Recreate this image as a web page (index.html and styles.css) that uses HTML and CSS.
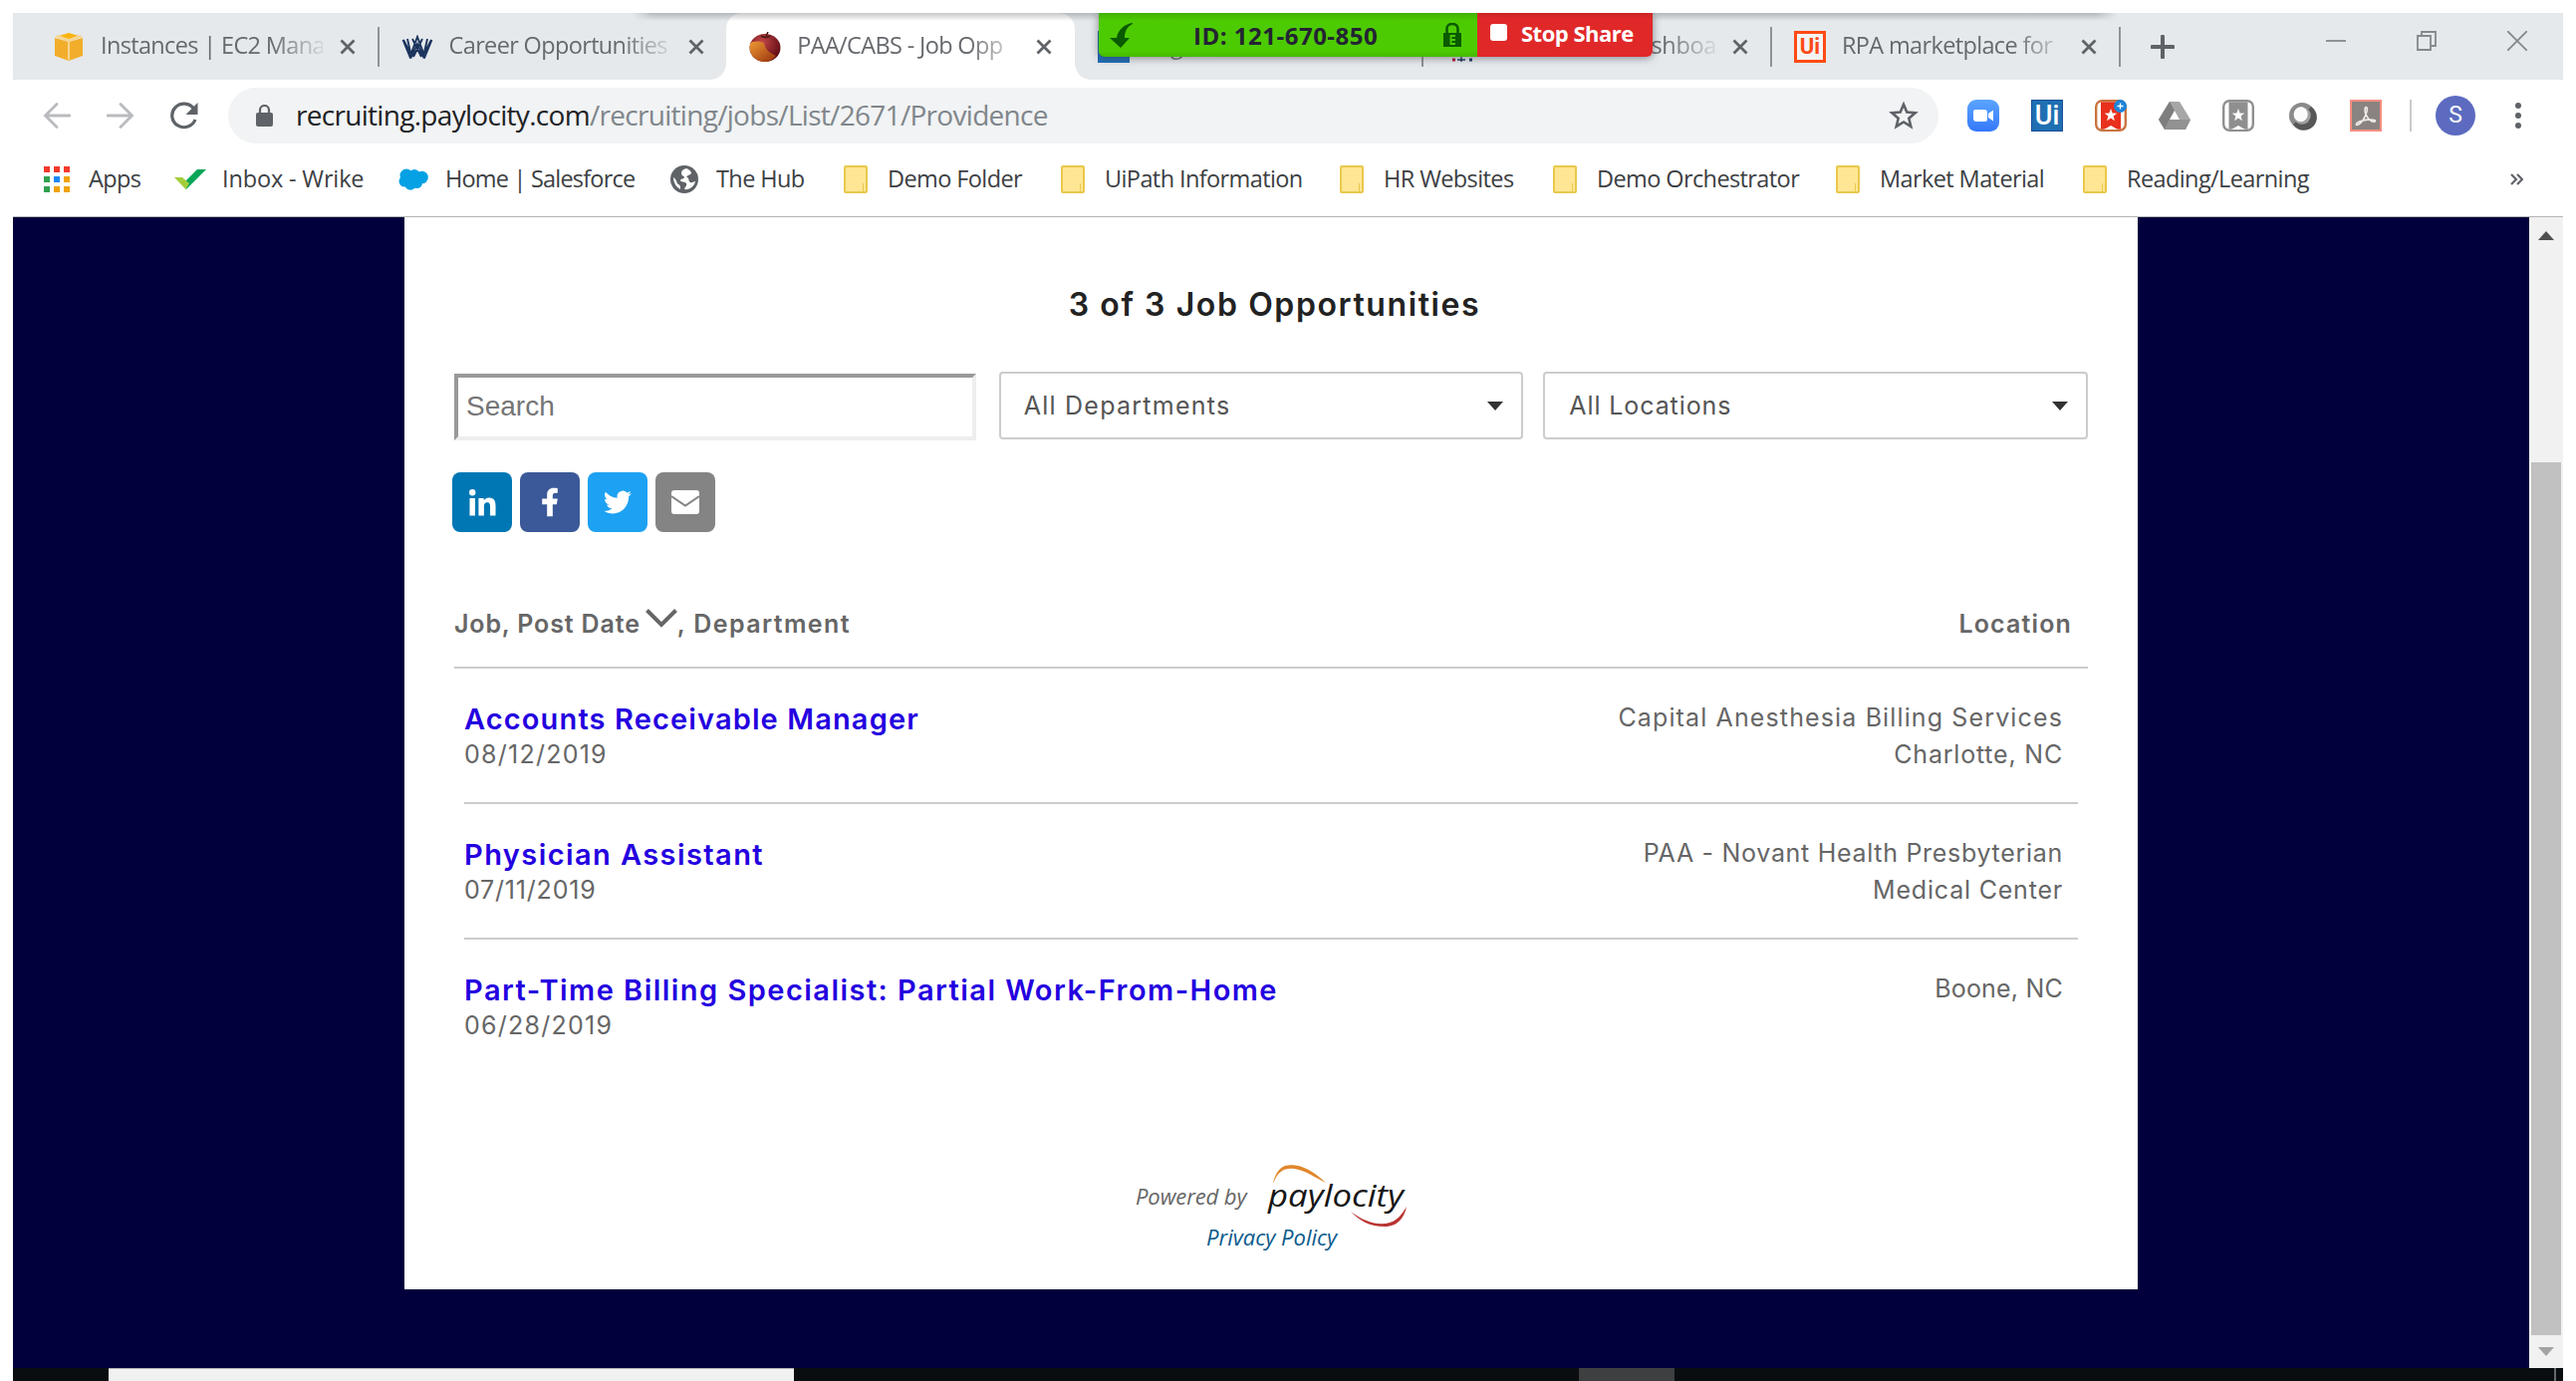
FILE: index.html
```
<!DOCTYPE html>
<html lang="en">
<head>
<meta charset="utf-8">
<title>PAA/CABS - Job Opportunities</title>
<link rel="stylesheet" href="styles.css">
</head>
<body>
<div class="screen">
  <header class="tabs">
    <div class="tab">
      <span class="fav"><svg width="30" height="30" viewBox="0 0 30 30"><path d="M1 6v18l14 5 14-5V6L15 10z" fill="#f2ae2b"/><path d="M15 1l10 3-10 4L5 4z" fill="#fbb40e"/><path d="M1 5l13 5v18h2V10l13-5-3-2-11 4L4 3z" fill="#f6d592"/></svg></span>
      <span class="title">Instances | EC2 Mana</span>
      <svg class="x" viewBox="0 0 16 16"><path d="M1.5 1.5l13 13m0-13l-13 13"/></svg>
    </div>
    <div class="tab sep-l">
      <span class="fav"><svg width="32" height="24" viewBox="0 0 32 24"><g fill="none" stroke="#1c355e" stroke-width="1.9"><path d="M1.500 5l7 17L16 2l7.500 20 7-17M6 4l4 18 6-13 6 13 4-18M11 4l9 18M21 4l-9 18M2 5l9 17M30 5L21 22"/></g></svg></span>
      <span class="title">Career Opportunities</span>
      <svg class="x" viewBox="0 0 16 16"><path d="M1.5 1.5l13 13m0-13l-13 13"/></svg>
    </div>
    <div class="tab active">
      <span class="fav"><svg width="32" height="30" viewBox="0 0 32 30"><defs><radialGradient id="ap" cx=".4" cy=".3" r=".7"><stop offset="0" stop-color="#c4464a"/><stop offset="1" stop-color="#5c0a10"/></radialGradient><linearGradient id="ora" x2="1" y2="1"><stop offset="0" stop-color="#ef9a35"/><stop offset="1" stop-color="#96300c"/></linearGradient></defs><ellipse cx="16" cy="16" rx="15.5" ry="14" fill="url(#ap)"/><path d="M1 12c2-3 9-3 14-1 1 6 5 10 12 13-3 4-7 6-11 6C6 30-1 22 1 12z" fill="url(#ora)"/><path d="M12 4c3 2 6 2 9 0M17 4l2-4" stroke="#4a1810" stroke-width="1.6" fill="none"/></svg></span>
      <span class="title">PAA/CABS - Job Opp</span>
      <svg class="x" viewBox="0 0 16 16"><path d="M1.5 1.5l13 13m0-13l-13 13"/></svg>
    </div>
    <div class="tab">
      <span class="fav"><svg width="32" height="32"><rect width="32" height="32" fill="#1e6db8"/></svg></span>
      <span class="title">Login</span>
    </div>
    <div class="tab sep-l">
      <span class="fav"><svg width="24" height="30" viewBox="0 0 24 30"><path d="M3 28h3" stroke="#b5123e" stroke-width="3"/><path d="M20 28h3" stroke="#1c355e" stroke-width="3"/><path d="M12 24v7M8 28h8" stroke="#1c355e" stroke-width="1.400"/></svg></span>
      <span class="title dash">shboa</span>
      <svg class="x" viewBox="0 0 16 16"><path d="M1.5 1.5l13 13m0-13l-13 13"/></svg>
    </div>
    <div class="tab sep-l">
      <span class="fav ui-o">Ui</span>
      <span class="title">RPA marketplace for</span>
      <svg class="x" viewBox="0 0 16 16"><path d="M1.5 1.5l13 13m0-13l-13 13"/></svg>
    </div>
    <div class="newtab"><svg width="24" height="24" viewBox="0 0 24 24"><path d="M12 1.5v21M1.5 12h21" stroke="#5f6368" stroke-width="4" stroke-linecap="round"/></svg></div>
    <div class="winbtns">
      <svg width="20" height="20" viewBox="0 0 20 20"><path d="M0 10h20"/></svg>
      <svg width="20" height="20" viewBox="0 0 20 20"><path d="M1 5h13v14H1zM5 5V1h14v14h-5"/></svg>
      <svg width="20" height="20" viewBox="0 0 20 20"><path d="M0 0l20 20M20 0L0 20"/></svg>
    </div>
  </header>

  <div class="toolbar">
    <svg class="nav" viewBox="0 0 28 28"><path d="M27 14H3M14 2.500L2.500 14 14 25.500" stroke="#b9bbbe" stroke-width="2.800" fill="none" stroke-linecap="round"/></svg>
    <svg class="nav" viewBox="0 0 28 28"><path d="M1 14h24M14 2.500L25.500 14 14 25.500" stroke="#b9bbbe" stroke-width="2.800" fill="none" stroke-linecap="round"/></svg>
    <svg class="nav" viewBox="0 0 28 28"><path d="M23.500 7A12 11.800 0 1 0 25 18" stroke="#5f6368" stroke-width="3.200" fill="none"/><path d="M27.500 1v12h-12z" fill="#5f6368"/></svg>
    <div class="omnibox">
      <svg width="17" height="22" viewBox="0 0 17 22"><rect y="8" width="17" height="14" rx="2" fill="#5f6368"/><path d="M4 9V5.500a4.500 4.500 0 0 1 9 0V9" fill="none" stroke="#5f6368" stroke-width="2.200"/></svg>
      <span class="url">recruiting.paylocity.com<i>/recruiting/jobs/List/2671/Providence</i></span>
      <svg class="star" width="30" height="30" viewBox="0 0 30 30"><path d="M15 3.800l3.300 7.700 8.400.7-6.400 5.500 2 8.200-7.300-4.400-7.300 4.400 2-8.200-6.400-5.500 8.400-.7z" fill="none" stroke="#5f6368" stroke-width="2.600"/></svg>
    </div>
    <div class="exts">
      <svg viewBox="0 0 32 32"><defs><linearGradient id="zm" x2="0" y2="1"><stop offset="0" stop-color="#5aa5ff"/><stop offset="1" stop-color="#3678fb"/></linearGradient></defs><rect width="32" height="32" rx="9" fill="url(#zm)"/><path d="M6 12q0-2 2-2h9q3 0 3 3v7q0 2-2 2H9q-3 0-3-3zM21 14l5-3.500v11L21 18z" fill="#fff"/></svg>
      <span class="ui-b">Ui</span>
      <svg viewBox="0 0 32 32"><rect x="1.200" y="1.200" width="29.600" height="29.600" rx="6" fill="#fff" stroke="#c9743f" stroke-width="2.400"/><path d="M6 2.400h20v27.200H6z" fill="#e8301c"/><path d="M9 30l7-4 7 4z" fill="#fff"/><path d="M16 9l1.600 4.600 4.700.1-3.700 2.900 1.300 4.700-3.900-2.700-3.900 2.700 1.300-4.700-3.700-2.900 4.700-.1z" fill="#fff"/><circle cx="25.500" cy="6.500" r="6.500" fill="#1d84d8"/><path d="M25.500 3.500v6M22.500 6.500h6" stroke="#fff" stroke-width="1.300"/></svg>
      <svg viewBox="0 0 32 32"><path d="M11 2h10l11 18-5 10H6L0 20z" fill="#a6a6a6"/><path d="M11 2l5 9L6 30 0 20z" fill="#7e7e7e"/><path d="M11 20h21l-5 10H6z" fill="#929292"/><path d="M16 11l5 9H11z" fill="#fff"/></svg>
      <svg viewBox="0 0 32 32"><rect x="1.200" y="1.200" width="29.600" height="29.600" rx="6" fill="#fff" stroke="#8f8f8f" stroke-width="2.400"/><path d="M6.500 2.400h19v27.200h-19z" fill="#8f8f8f"/><path d="M9 30l7-4 7 4z" fill="#fff"/><path d="M16 9l1.600 4.600 4.700.1-3.700 2.900 1.300 4.700-3.900-2.700-3.900 2.700 1.300-4.700-3.700-2.900 4.700-.1z" fill="#fff"/></svg>
      <svg viewBox="0 0 32 32"><circle cx="16" cy="17.500" r="13.500" fill="#f0f0f0"/><circle cx="16" cy="16" r="13" fill="#8a8a8a"/><path d="M25 7A13 13 0 1 1 7 25l3-3A9 9 0 0 0 22 10z" fill="#575757"/><circle cx="16" cy="16" r="8.700" fill="#a0a0a0"/><ellipse cx="14.700" cy="14.700" rx="7" ry="7.500" fill="#fafafa"/></svg>
      <svg viewBox="0 0 32 32"><rect x="1" y="1" width="30" height="30" fill="#8b8381" stroke="#f58e80" stroke-width="2"/><path d="M15.500 8c1.500-1.500 2.500 1 1.500 4-1.500 5-5 11-8.500 13-3 1.500-3-1.500 1-3 5-2 12-2.500 15-1.500 2.500 1 0 2.500-3 1-4-2-7.500-9-6-13.500z" fill="none" stroke="#f0eceb" stroke-width="1.600"/></svg>
    </div>
    <span class="vline"></span>
    <span class="avatar">S</span>
    <svg class="dots" width="6" height="28" viewBox="0 0 6 28"><g fill="#5f6368"><circle cx="3" cy="4" r="3"/><circle cx="3" cy="14" r="3"/><circle cx="3" cy="24" r="3"/></g></svg>
  </div>

  <nav class="bookmarks">
    <a class="b-apps"><svg width="26" height="26" viewBox="0 0 26 26"><path d="M0 0h6v6H0zM10 0h6v6h-6zM20 0h6v6h-6z" fill="#f5382c"/><path d="M0 10h6v6H0zM0 20h6v6H0z" fill="#30a04f"/><path d="M10 10h6v6h-6z" fill="#1d88f5"/><path d="M20 10h6v6h-6zM10 20h6v6h-6zM20 20h6v6h-6z" fill="#f0a206"/></svg><span>Apps</span></a>
    <a class="b-wrike"><svg width="32" height="20" viewBox="0 0 32 20"><path d="M23 0h9L12 20 8 15z" fill="#0aa658"/><path d="M0 8h8l7 6-3.500 6z" fill="#a3ce3a"/></svg><span>Inbox - Wrike</span></a>
    <a class="b-sf"><svg width="30" height="22" viewBox="0 0 30 22"><g fill="#05a1e4"><circle cx="8" cy="7" r="6.500"/><circle cx="16" cy="6.500" r="5.500"/><circle cx="23.500" cy="9" r="6.300"/><circle cx="6" cy="13" r="5.500"/><circle cx="12" cy="16" r="5.800"/><circle cx="18.500" cy="14.500" r="5.500"/></g></svg><span>Home | Salesforce</span></a>
    <a class="b-hub"><svg width="28" height="28" viewBox="0 0 28 28"><circle cx="14" cy="14" r="14" fill="#5f6368"/><path d="M16 3c-3 1-5 2-5 5s3 2 3 4-4 1-4 3 5 1 6 3-1 3-2 6c5 1 10-3 11-8-2 0-3 2-5 1s-1-4-3-5 1-2 3-3 1-4-4-6z" fill="#fff"/><path d="M3 12c0 5 3 10 7 12 0-3 0-4-2-5s-1-4-5-7z" fill="#fff"/></svg><span>The Hub</span></a>
    <a class="b-demo"><b></b><span>Demo Folder</span></a>
    <a class="b-uip"><b></b><span>UiPath Information</span></a>
    <a class="b-hr"><b></b><span>HR Websites</span></a>
    <a class="b-orch"><b></b><span>Demo Orchestrator</span></a>
    <a class="b-mkt"><b></b><span>Market Material</span></a>
    <a class="b-read"><b></b><span>Reading/Learning</span></a>
    <svg class="more" width="13" height="12" viewBox="0 0 13 12"><path d="M1 1l5 5-5 5M7 1l5 5-5 5" fill="none" stroke="#5f6368" stroke-width="2.200"/></svg>
  </nav>

  <div class="viewport">
    <div class="page">
      <main class="card">
        <h1>3 of 3 Job Opportunities</h1>
        <div class="filters">
          <div class="search">Search</div>
          <div class="select dep"><span>All Departments</span><i></i></div>
          <div class="select loc"><span>All Locations</span><i></i></div>
        </div>
        <div class="share">
          <span class="li"><svg viewBox="0 0 24 24" width="37" height="37"><path fill="#fff" d="M20.447 20.452h-3.554v-5.569c0-1.328-.027-3.037-1.852-3.037-1.853 0-2.136 1.445-2.136 2.939v5.667H9.351V9h3.414v1.561h.046c.477-.9 1.637-1.850 3.370-1.850 3.601 0 4.267 2.370 4.267 5.455v6.286zM5.337 7.433a2.062 2.062 0 01-2.063-2.065 2.064 2.064 0 112.063 2.065zm1.782 13.019H3.555V9h3.564v11.452z"/></svg></span>
          <span class="fb"><svg viewBox="0 0 24 24" width="34" height="34"><path fill="#fff" d="M14 13.500h2.800l.7-4H14v-2c0-1.030.4-2 2-2h1.500V2.140c-.326-.043-1.557-.140-2.857-.140C11.928 2 10 3.657 10 6.700v2.800H6.500v4H10V22h4z"/></svg></span>
          <span class="tw"><svg viewBox="0 0 24 24" width="28" height="28"><path fill="#fff" d="M23.953 4.570a10 10 0 01-2.825.775 4.958 4.958 0 002.163-2.723c-.951.555-2.005.959-3.127 1.184a4.920 4.920 0 00-8.384 4.482C7.690 8.095 4.067 6.130 1.640 3.162a4.822 4.822 0 00-.666 2.475c0 1.710.870 3.213 2.188 4.096a4.904 4.904 0 01-2.228-.616v.060a4.923 4.923 0 003.946 4.827 4.996 4.996 0 01-2.212.085 4.936 4.936 0 004.604 3.417 9.867 9.867 0 01-6.102 2.105c-.390 0-.779-.023-1.170-.067a13.995 13.995 0 007.557 2.209c9.053 0 13.998-7.496 13.998-13.985 0-.210 0-.420-.015-.630A9.935 9.935 0 0024 4.590z"/></svg></span>
          <span class="em"><svg viewBox="0 0 28 24" width="28" height="24"><rect width="28" height="24" rx="3" fill="#fff"/><path d="M0 6l14 9.500L28 6" fill="none" stroke="#848484" stroke-width="2"/></svg></span>
        </div>
        <div class="thead">
          <span class="s1">Job, Post Date</span><svg width="32" height="19" viewBox="0 0 32 19"><path d="M1.500 1.500L16 16 30.500 1.500" fill="none" stroke="#666" stroke-width="4"/></svg><span class="s2">, Department</span>
          <span class="s3">Location</span>
        </div>
        <section class="row">
          <div><a class="j1">Accounts Receivable Manager</a><time>08/12/2019</time></div>
          <p><span class="l1">Capital Anesthesia Billing Services</span><br>Charlotte, NC</p>
        </section>
        <section class="row">
          <div><a class="j2">Physician Assistant</a><time class="d2">07/11/2019</time></div>
          <p><span class="l2">PAA - Novant Health Presbyterian</span><br>Medical Center</p>
        </section>
        <section class="row last">
          <div><a class="j3">Part-Time Billing Specialist: Partial Work-From-Home</a><time>06/28/2019</time></div>
          <p><span class="l3">Boone, NC</span></p>
        </section>
        <footer>
          <div class="powered"><span>Powered by</span>
            <svg width="146" height="72" viewBox="0 0 146 72"><text x="3" y="46" textLength="136" lengthAdjust="spacingAndGlyphs" class="logo">paylocity</text><path d="M8 22C12 6 20 3 30 4.500 42 6 52 14 61 22 50 17 40 9 29 8 19 7 13 11 9 21z" fill="#e0862c"/><path d="M86 51c12 9 23 13 35 12 12-2 16-9 21-17-2 10-8 20-22 20-15 0-25-6-34-15z" fill="#b93432"/></svg>
          </div>
          <a class="privacy">Privacy Policy</a>
        </footer>
      </main>
    </div>
    <aside class="scroll">
      <svg width="16" height="9" viewBox="0 0 16 9"><path d="M0 9l8-9 8 9z" fill="#505050"/></svg>
      <span class="thumb"></span>
      <svg width="16" height="9" viewBox="0 0 16 9"><path d="M0 0h16l-8 9z" fill="#a3a3a3"/></svg>
    </aside>
  </div>
  <div class="taskbar"><span class="tb-a"></span><span class="tb-b"></span><span class="tb-c"></span></div>

  <div class="topshade"></div>
  <div class="sharebar">
    <div class="green">
      <svg width="24" height="25" viewBox="0 0 24 25"><path d="M23 0C15 1 8 7 7 15H0l11 10 9-10h-5C15 9 17 4 23 1z" fill="#0a5a00"/></svg>
      <span class="id">ID: 121-670-850</span>
      <svg width="18" height="24" viewBox="0 0 18 24"><rect y="10" width="18" height="14" fill="#0a5a00"/><path d="M3.500 11V5.500a5.500 4.500 0 0 1 11 0V11" fill="none" stroke="#0a5a00" stroke-width="2.600"/><path d="M12 13H7.500v8H12M7.500 17H12" fill="none" stroke="#4dcb02" stroke-width="1.800"/></svg>
    </div>
    <div class="red"><i></i>Stop Share</div>
  </div>
</div>
</body>
</html>
```
FILE: styles.css
```
* { box-sizing: border-box; }
body { margin: 0; background: #fff; font-family: "Open Sans", "Noto Sans", sans-serif; }
svg { display: block; flex: none; }
.screen { position: relative; width: 2560px; height: 1373px; margin: 13px 13px 0; overflow: hidden; }

/* tab strip */
.tabs { display: flex; height: 67px; padding-left: 17px; background: #e5e9ec; }
.tab { position: relative; flex: none; width: 349.600px; height: 67px; display: flex; align-items: center; padding-left: 23px; }
.tab.sep-l::before, .newtab::before { content: ""; position: absolute; left: -1px; top: 14px; width: 2px; height: 40px; background: #8f9397; }
.fav { width: 32px; margin-right: 16px; display: flex; justify-content: center; flex: none; }
.title { width: 223px; flex: none; padding-bottom: 3px; font-size: 23.500px; letter-spacing: -.65px; color: #66696d; white-space: nowrap;
  -webkit-mask-image: linear-gradient(90deg, #000 172px, transparent 230px); mask-image: linear-gradient(90deg, #000 172px, transparent 230px); }
.dash { padding-left: 158px; letter-spacing: -.3px; }
.x { width: 16px; height: 16px; margin-left: 17px; fill: none; stroke: #5f6368; stroke-width: 2.800; }
.tab.active { background: #fff; border-radius: 16px 16px 0 0; }
.active::before, .active::after { content: ""; position: absolute; bottom: 0; width: 16px; height: 16px; }
.active::before { left: -16px; background: radial-gradient(circle at 0 0, transparent 15.500px, #fff 16px); }
.active::after { right: -16px; background: radial-gradient(circle at 100% 0, transparent 15.500px, #fff 16px); }
.ui-o { height: 32px; border: 3px solid #ff4a14; color: #ff4a14; font: 700 22px/25px Roboto, sans-serif; background: #f4f4f4; }
.newtab { position: relative; width: 100px; padding: 22px 0 0 31px; }
.winbtns { margin-left: auto; padding: 18px 36px 0 0; display: flex; gap: 71px; }
.winbtns svg { fill: none; stroke: #85888b; stroke-width: 1.800; }

/* toolbar */
.toolbar { display: flex; align-items: center; height: 72px; padding-left: 30px; }
.nav { width: 28px; height: 28px; margin-right: 36px; }
.omnibox { display: flex; align-items: center; width: 1717px; height: 56px; margin-left: -6px; margin-right: 29px; padding: 0 20px 0 28px; border-radius: 28px; background: #f1f3f4; flex: none; }
.url { margin: 0 auto 0 23px; padding-bottom: 2px; font-size: 28px; letter-spacing: -.7px; color: #202124; }
.url i { font-style: normal; color: #80868b; }
.exts { display: flex; gap: 32px; }
.exts svg, .ui-b { width: 32px; height: 32px; }
.ui-b { background: #1f6fb2; border: 1px solid #1a4f9c; color: #fff; font: 500 27px/30px Roboto, sans-serif; text-align: center; }
.vline { width: 2px; height: 32px; background: #c9cbce; margin: 0 24px 0 28px; }
.avatar { width: 40px; height: 40px; border-radius: 50%; background: #5c6bc0; color: #fff; font: 400 23px/40px Roboto, sans-serif; text-align: center; }
.dots { margin-left: 40px; }

/* bookmarks */
.bookmarks { display: flex; align-items: center; height: 66px; padding: 0 0 9px 30px; border-bottom: 1px solid #b5b5b7; }
.bookmarks a { display: flex; align-items: center; height: 56px; flex: none; font-size: 23.500px; letter-spacing: -.6px; color: #3c4043; white-space: nowrap; }
.bookmarks span { padding-bottom: 2px; margin-left: -1px; }
.bookmarks b { width: 24px; height: 28px; margin-right: 21px; border: 2px solid #e9c84c; border-radius: 2px; background: linear-gradient(#e9c84c, #e9c84c) 17px 16px / 1px 9px no-repeat, #ffe694; }
.b-apps { width: 132px; padding-left: 1px; } .b-apps svg { margin-right: 20px; }
.b-wrike { width: 225px; } .b-wrike svg { margin-right: 17px; } .bookmarks .b-wrike { letter-spacing: -.15px; }
.b-sf { width: 273px; } .b-sf svg { margin-right: 18px; } .bookmarks .b-sf { letter-spacing: -.8px; }
.b-hub { width: 174px; } .b-hub svg { margin-right: 19px; }
.b-demo { width: 218px; } .b-uip { width: 280px; } .b-hr { width: 214px; }
.b-orch { width: 284px; } .b-mkt { width: 248px; } .b-read { width: 260px; }
.more { margin-left: auto; margin-right: 40px; }

/* page */
.viewport { display: flex; height: 1155px; }
.page { width: 2526px; background: #02003c; padding-left: 393px; }
.card { width: 1740px; height: 1076px; padding: 68px 50px 0; background: #fff; color: #666; font-family: Inter, sans-serif; font-size: 25px; }
h1 { margin: 0 0 47px; padding-left: 7px; text-align: center; font-size: 32px; line-height: 40px; font-weight: 600; letter-spacing: 1.600px; color: #222; }
.filters { display: flex; height: 68px; }
.search { width: 524px; height: 67px; margin: 2px 23px 0 0; padding-left: 8px; border: 4px solid; border-color: #999 #eee #eee #999; font: 28px/58px "Liberation Sans", Arial, sans-serif; color: #757575; }
.select { display: flex; align-items: center; justify-content: space-between; border: 2px solid #ccc; border-radius: 4px; color: #555; letter-spacing: 1.250px; }
.select i { width: 0; border: 8px solid transparent; border-top: 9px solid #333; border-bottom: 0; }
.dep { width: 527px; margin-right: 20px; padding: 0 18px 0 23px; }
.loc { width: 547px; padding: 0 18px 0 24px; letter-spacing: .9px; }
.share { display: flex; gap: 8px; margin: 33px 0 0 -2px; }
.share span { width: 60px; height: 60px; border-radius: 8px; display: flex; align-items: center; justify-content: center; }
.li { background: #0077b5; } .fb { background: #3b5998; } .tw { background: #1da1f2; } .em { background: #848484; }
.thead { display: flex; align-items: center; height: 88px; margin-top: 49px; border-bottom: 2px solid #ccc; font-weight: 600; }
.thead svg { margin: -12px 0 0 5px; }
.thead span { line-height: 36px; }
.s1 { letter-spacing: .85px; } .s2 { letter-spacing: 1.400px; } .s3 { margin-left: auto; padding-right: 16px; letter-spacing: 1.150px; }
.row { display: flex; justify-content: space-between; height: 136px; margin: 0 10px; padding: 31px 15px 0 0; border-bottom: 2px solid #ccc; }
.row.last { border: 0; }
.row a { display: block; height: 37px; font-size: 29px; line-height: 39px; font-weight: 600; letter-spacing: 1.200px; color: #2400e0; }
.row time { display: block; line-height: 36px; letter-spacing: 1.250px; }
.row .d2 { letter-spacing: .8px; }
.row p { margin: 0; text-align: right; line-height: 37px; letter-spacing: .8px; }
.row .j1 { letter-spacing: 1.130px; } .row .j2 { letter-spacing: 1.420px; } .row .j3 { letter-spacing: 1.460px; }
.l1 { letter-spacing: 1.130px; } .l2 { letter-spacing: .7px; } .l3 { letter-spacing: .2px; }
footer { margin-top: 86px; font: italic 22px/30px "Open Sans", sans-serif; }
.powered { display: flex; align-items: center; height: 72px; margin-left: 684px; }
.powered span { padding-bottom: 3px; letter-spacing: -.1px; }
.powered svg { margin-left: 19px; }
.logo { font: italic 500 31px "Open Sans", sans-serif; fill: #161616; }
.privacy { display: block; margin: -11px 0 0 755px; color: #0b5a8c; }

.scroll { width: 34px; background: #f1f1f1; display: flex; flex-direction: column; align-items: center; padding: 14px 0 12px; }
.thumb { width: 30px; height: 876px; margin: 223px 0 auto; background: #c1c1c1; }

.taskbar { display: flex; height: 13px; background: #0a0d10; }
.tb-a { width: 688px; margin-left: 96px; background: #f1f1f1; border-top: 1px solid #b5b5b5; }
.tb-b { width: 96px; margin-left: 788px; background: #3d3f40; }
.tb-c { width: 2px; margin-left: 883px; background: #66686a; }

/* screen share bar, over the tab strip */
.topshade { position: absolute; left: 622px; top: 0; width: 1490px; height: 8px; background: linear-gradient(rgba(70,70,80,.3), rgba(70,70,80,0)); -webkit-mask-image: linear-gradient(90deg, transparent, #000 20px 1470px, transparent); mask-image: linear-gradient(90deg, transparent, #000 20px 1470px, transparent); }
.sharebar { position: absolute; left: 1090px; top: 0; display: flex; height: 44px; border-radius: 0 0 6px 6px; box-shadow: 0 1px 9px rgba(60,60,70,.6); }
.green { width: 380px; display: flex; align-items: center; padding: 0 16px 0 11px; background: linear-gradient(#43b000, #4dcb02 8px 38px, #45b800); border-radius: 0 0 0 6px; }
.id { margin: 0 auto 0 60px; font-weight: 700; font-size: 24px; letter-spacing: .5px; color: #232333; }
.red { width: 176px; display: flex; align-items: center; padding-bottom: 5px; padding-left: 13px; background: linear-gradient(#c92424, #e02828 6px); border-radius: 0 0 6px 0; color: #fff; font-weight: 700; font-size: 22px; letter-spacing: -.5px; white-space: nowrap; }
.red i { width: 17px; height: 17px; margin-right: 14px; border-radius: 3px; background: #fff; }
```
